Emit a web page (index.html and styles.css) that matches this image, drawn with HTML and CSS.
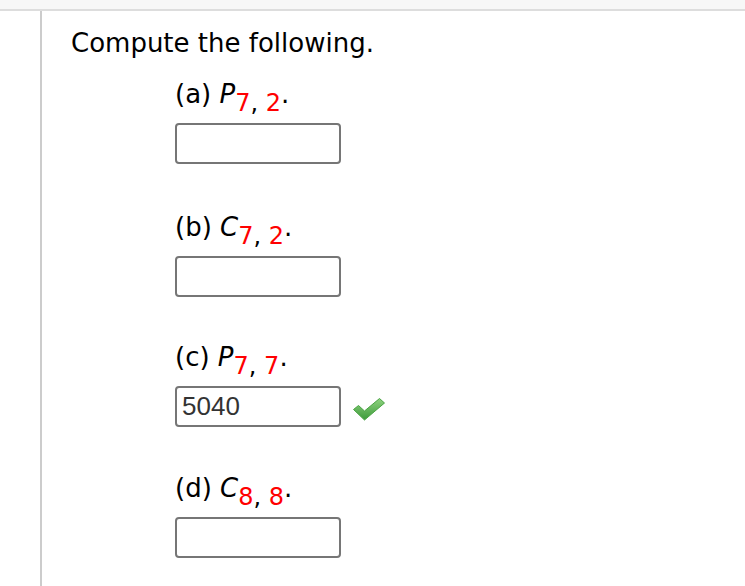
FILE: index.html
```html
<!DOCTYPE html>
<html lang="en">
<head>
<meta charset="utf-8">
<title>Compute the following</title>
<link rel="stylesheet" href="styles.css">
</head>
<body>
<div class="topbar"></div>
<div class="page">
  <div class="content">
    <p class="title">Compute the following.</p>
    <div class="items">
      <div class="item">
        <div class="label">(a) <i class="var">P</i><sub class="sub"><span class="red">7</span>, <span class="red">2</span></sub>.</div>
        <div class="answer"><input class="field" type="text" value=""></div>
      </div>
      <div class="item item-b">
        <div class="label">(b) <i class="var">C</i><sub class="sub"><span class="red">7</span>, <span class="red">2</span></sub>.</div>
        <div class="answer"><input class="field" type="text" value=""></div>
      </div>
      <div class="item">
        <div class="label">(c) <i class="var">P</i><sub class="sub"><span class="red">7</span>, <span class="red">7</span></sub>.</div>
        <div class="answer"><input class="field" type="text" value="5040">
          <svg class="check" width="34" height="25" viewBox="0 0 34 25" aria-hidden="true">
            <defs>
              <linearGradient id="g" x1="0" y1="0" x2="0" y2="1">
                <stop offset="0" stop-color="#8fd27f"/>
                <stop offset="1" stop-color="#3c9a3a"/>
              </linearGradient>
            </defs>
            <path d="M1.5 12.5 L6.5 8.5 L12.5 14 L27.5 1.5 L32.5 6 L12.5 23 Z" fill="url(#g)" stroke="#4aa444" stroke-width="1" stroke-linejoin="round"/>
          </svg>
        </div>
      </div>
      <div class="item">
        <div class="label">(d) <i class="var">C</i><sub class="sub"><span class="red">8</span>, <span class="red">8</span></sub>.</div>
        <div class="answer"><input class="field" type="text" value=""></div>
      </div>
    </div>
  </div>
</div>
</body>
</html>
```
FILE: styles.css
```css
html, body {
  margin: 0;
  padding: 0;
  background: #ffffff;
}
body {
  font-family: "DejaVu Sans", Verdana, sans-serif;
  color: #000;
  width: 745px;
  height: 586px;
  overflow: hidden;
}
.topbar {
  height: 9px;
  background: #f7f7f7;
  border-bottom: 2px solid #dddddd;
}
.page {
  margin-left: 40px;
  border-left: 2px solid #cccccc;
  height: 575px;
}
.content {
  padding: 17px 0 0 29px;
}
.title {
  margin: 0;
  font-size: 26px;
  line-height: 30px;
}
.items {
  margin-top: 21px;
  padding-left: 104px;
  display: flex;
  flex-direction: column;
  align-items: flex-start;
}
.item {
  margin-bottom: 46px;
}
.item-b {
  margin-top: 2px;
  margin-bottom: 45px;
}
.label {
  font-size: 26px;
  line-height: 30px;
  white-space: nowrap;
}
.var {
  font-style: italic;
}
.sub {
  font-size: 24px;
  line-height: 0;
  vertical-align: -8px;
}
.red {
  color: #ff0000;
}
.answer {
  margin-top: 14px;
  display: flex;
  align-items: center;
  gap: 11px;
}
.field {
  box-sizing: border-box;
  width: 166px;
  height: 41px;
  margin: 0;
  border: 2px solid #767676;
  border-radius: 4px;
  padding: 0 5px;
  font-family: "Liberation Sans", Arial, sans-serif;
  font-size: 26px;
  color: #333333;
  background: #ffffff;
  outline: none;
}
.check {
  display: block;
  margin-top: 5px;
}
```
